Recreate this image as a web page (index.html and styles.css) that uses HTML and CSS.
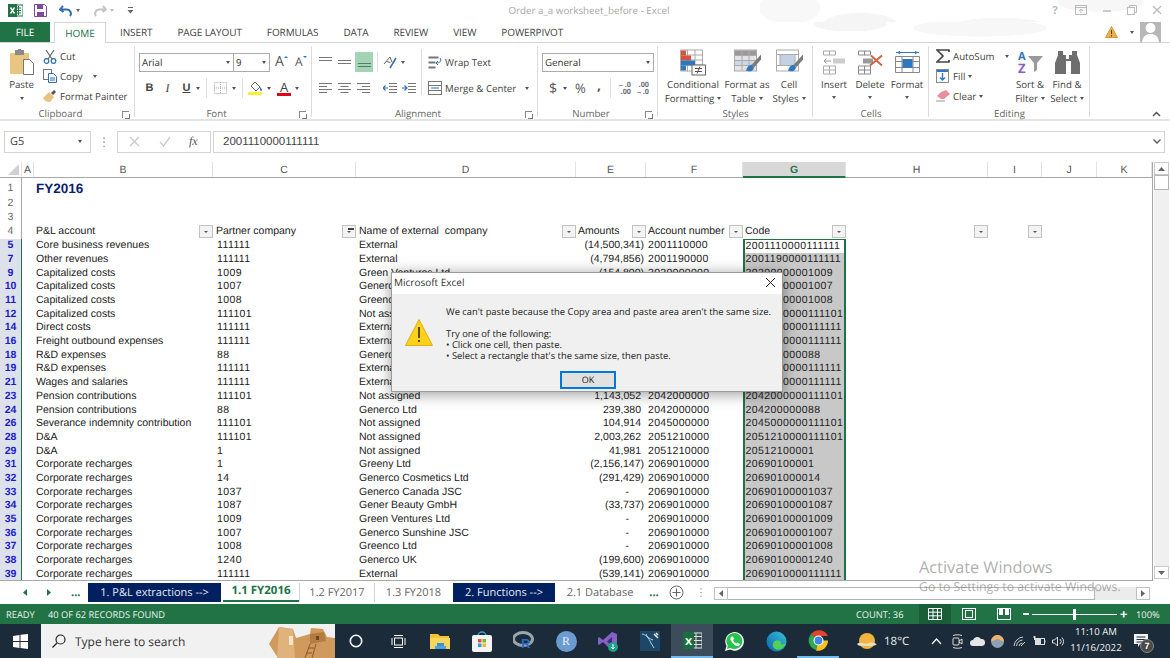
FILE: index.html
```html
<!DOCTYPE html>
<html lang="en">
<head>
<meta charset="utf-8">
<title>Order a_a worksheet_before - Excel</title>
<link rel="stylesheet" href="styles.css">
</head>
<body>
<div class="app">

<header class="titlebar">
  <div class="qat">
    <svg class="qi-xl" width="15" height="15" viewBox="0 0 15 15"><rect x="6" y="2" width="9" height="11" fill="#fff" stroke="#217346"/><path d="M8 5h5M8 7.500h5M8 10h5M10.500 3v9" stroke="#217346" fill="none"/><rect x="0" y="1" width="9" height="13" fill="#217346"/><path d="M2.500 4.500l4 6M6.500 4.500l-4 6" stroke="#fff" stroke-width="1.400"/></svg>
    <svg class="qi-save" width="13" height="13" viewBox="0 0 13 13"><path d="M.5.500h10l2 2v10H.500z" fill="#fff" stroke="#7d4a9e"/><rect x="3" y="1" width="6" height="4" fill="#7d4a9e"/><rect x="3" y="8" width="7" height="4" fill="#7d4a9e"/></svg>
    <svg class="qi-undo" width="14" height="13" viewBox="0 0 14 13"><path d="M4 2L1 5.500 4.500 8M1.500 5.500h6.500a4 4 0 0 1 3 6.500" fill="none" stroke="#2f6fb0" stroke-width="2"/></svg>
    <i class="caret qc1"></i>
    <svg class="qi-redo" width="14" height="13" viewBox="0 0 14 13"><path d="M10 2l3 3.500L9.500 8M12.500 5.500H6a4 4 0 0 0-3 6.500" fill="none" stroke="#c4c4c4" stroke-width="2"/></svg>
    <i class="caret lite qc2"></i>
    <svg class="qi-cust" width="7" height="8" viewBox="0 0 7 8"><path d="M1 1.500h5" stroke="#666"/><path d="M.5 4h6l-3 3.500z" fill="#666"/></svg>
  </div>
  <div class="doc-title">Order a_a worksheet_before - Excel</div>
  <div class="winctl">
    <span class="help">?</span>
    <svg width="12" height="10" viewBox="0 0 12 10"><rect x=".5" y=".5" width="11" height="9" fill="none" stroke="#bbb"/><path d="M.5 2.500h11M6 8V4M4 6l2-2 2 2" stroke="#bbb" fill="none"/></svg>
    <svg width="10" height="10" viewBox="0 0 10 10"><path d="M1 6h8" stroke="#bbb" stroke-width="1.500"/></svg>
    <svg width="10" height="10" viewBox="0 0 10 10"><rect x=".5" y="2.500" width="7" height="7" fill="none" stroke="#bbb"/><path d="M2.500 2.500v-2h7v7h-2" fill="none" stroke="#bbb"/></svg>
    <svg width="10" height="10" viewBox="0 0 10 10"><path d="M1 1l8 8M9 1l-8 8" stroke="#bbb" stroke-width="1.300"/></svg>
  </div>
</header>

<nav class="tabs">
  <div class="tab-file">FILE</div>
  <div class="tab-home">HOME</div>
  <div class="tab-list">
    <span>INSERT</span><span>PAGE LAYOUT</span><span>FORMULAS</span><span>DATA</span><span>REVIEW</span><span>VIEW</span><span>POWERPIVOT</span>
  </div>
  <div class="tab-right">
    <svg width="13" height="12" viewBox="0 0 13 12"><path d="M6.500.500l6 11H.500z" fill="#eab04a" stroke="#d39a35"/><path d="M6.500 4v4M6.500 9v1.500" stroke="#5b4416"/></svg>
    <i class="caret dark"></i>
    <svg class="avatar" width="21" height="22" viewBox="0 0 21 22"><rect width="21" height="22" fill="#b7b7b7"/><circle cx="10.500" cy="8" r="5" fill="#fff"/><path d="M2 22c1-6 4-8 8.500-8s7.500 2 8.500 8z" fill="#fff"/></svg>
  </div>
</nav>

<section class="ribbon">
  <div class="grp g-clip">
    <div class="grp-body clip-body">
      <div class="paste">
        <svg width="26" height="27" viewBox="0 0 26 27"><rect x="1" y="4" width="19" height="21" rx="1" fill="#eac582"/><rect x="6" y="1" width="9" height="5" fill="#8a8a8a"/><rect x="9" y="0" width="3" height="2" fill="#8a8a8a"/><path d="M14.500 10.500h6l4 4v11h-10z" fill="#fff" stroke="#777"/></svg>
        <span>Paste</span>
        <i class="caret dark"></i>
      </div>
      <div class="small-col">
        <div class="sm"><svg width="14" height="15" viewBox="0 0 14 15"><path d="M3 1l6 9M11 1l-6 9" stroke="#666" stroke-width="1.200"/><circle cx="3.500" cy="12" r="2.300" fill="none" stroke="#2f6fb0" stroke-width="1.200"/><circle cx="10.500" cy="12" r="2.300" fill="none" stroke="#2f6fb0" stroke-width="1.200"/></svg><span>Cut</span></div>
        <div class="sm"><svg width="14" height="14" viewBox="0 0 14 14"><rect x=".5" y=".5" width="8" height="10" fill="#fff" stroke="#777"/><path d="M5.500 4.500h5l3 3v6h-8z" fill="#fff" stroke="#2f6fb0"/><path d="M7 9h5M7 11h5" stroke="#2f6fb0"/></svg><span>Copy</span><i class="caret dark copy-caret"></i></div>
        <div class="sm"><svg width="14" height="14" viewBox="0 0 14 14"><path d="M8 4l3-3 2 2-3 3z" fill="#555"/><path d="M0 9l6-6 5 5-4 5c-3 0-5-1-7-4z" fill="#e8c27e"/></svg><span>Format Painter</span></div>
      </div>
    </div>
    <div class="grp-label"><span>Clipboard</span><i class="launch"></i></div>
  </div>

  <div class="grp g-font">
    <div class="grp-body rows">
      <div class="rrow">
        <div class="combo c-font"><span>Arial</span><i class="caret dark"></i></div>
        <div class="combo c-size"><span>9</span><i class="caret dark"></i></div>
        <span class="grow-a">A<i class="up"></i></span>
        <span class="grow-a small">A<i class="down"></i></span>
      </div>
      <div class="rrow">
        <span class="fb b">B</span><span class="fb i">I</span><span class="fb u">U</span><i class="caret dark"></i>
        <i class="vsep s1"></i>
        <svg class="borders" width="13" height="12" viewBox="0 0 13 12"><rect x=".5" y=".5" width="12" height="11" fill="none" stroke="#aaa" stroke-dasharray="1 1"/><path d="M6.500 0v12M0 6h13" stroke="#aaa" stroke-dasharray="1 1"/></svg>
        <i class="caret dark c2"></i>
        <i class="vsep s2"></i>
        <svg class="fill" width="15" height="14" viewBox="0 0 15 14"><path d="M7 1l5 5-4 4-5-5z" fill="#fff" stroke="#666"/><path d="M12 6c1 1 2 2 2 3s-2 1-2 0z" fill="#2f6fb0"/><rect x="0" y="11" width="14" height="3" fill="#ffef3a"/></svg>
        <i class="caret dark c3"></i>
        <span class="fcolor">A</span>
        <i class="caret dark c4"></i>
      </div>
    </div>
    <div class="grp-label"><span>Font</span><i class="launch"></i></div>
  </div>

  <div class="grp g-align">
    <div class="grp-body align-body">
      <div class="rows al-left">
        <div class="rrow">
          <svg class="al" width="13" height="14" viewBox="0 0 13 14"><path d="M0 2.500h13M0 5.500h13" stroke="#777"/></svg>
          <svg class="al" width="13" height="14" viewBox="0 0 13 14"><path d="M0 5.500h13M0 8.500h13" stroke="#777"/></svg>
          <span class="al-on"><svg width="13" height="14" viewBox="0 0 13 14"><path d="M0 8.500h13M0 11.500h13" stroke="#5c7c68"/></svg></span>
          <i class="vsep s3"></i>
          <svg class="orient" width="14" height="14" viewBox="0 0 14 14"><path d="M1 9l6-7 2 5M3.500 6.500l4 1" fill="none" stroke="#666"/><path d="M13 3L7 13" stroke="#2f6fb0" stroke-width="1.500"/></svg>
          <i class="caret dark c5"></i>
        </div>
        <div class="rrow">
          <svg class="al" width="13" height="12" viewBox="0 0 13 12"><path d="M0 1.500h13M0 4.500h8M0 7.500h13M0 10.500h8" stroke="#777"/></svg>
          <svg class="al" width="13" height="12" viewBox="0 0 13 12"><path d="M0 1.500h13M2.500 4.500h8M0 7.500h13M2.500 10.500h8" stroke="#777"/></svg>
          <svg class="al al3" width="13" height="12" viewBox="0 0 13 12"><path d="M0 1.500h13M5 4.500h8M0 7.500h13M5 10.500h8" stroke="#777"/></svg>
          <svg class="indent" width="14" height="12" viewBox="0 0 14 12"><path d="M6 1.500h8M6 4.500h8M6 7.500h8M6 10.500h8" stroke="#777"/><path d="M5 6H0M2.500 3.500L0 6l2.500 2.500" fill="none" stroke="#2f6fb0" stroke-width="1.200"/></svg>
          <svg class="indent i2" width="14" height="12" viewBox="0 0 14 12"><path d="M0 1.500h8M0 4.500h8M0 7.500h8M0 10.500h8" stroke="#777" transform="translate(6)"/><path d="M0 6h5M2.500 3.500L5 6 2.500 8.500" fill="none" stroke="#2f6fb0" stroke-width="1.200"/></svg>
        </div>
      </div>
      <i class="vsep tall"></i>
      <div class="rows al-right">
        <div class="sm"><svg width="14" height="13" viewBox="0 0 14 13"><path d="M.5 1.500h10M.5 6.500h7M.5 11.500h7" stroke="#777" stroke-width="2"/><path d="M12 2c2 3 0 5-4 5M10 5L8 7l2 2" fill="none" stroke="#2f6fb0"/></svg><span>Wrap Text</span></div>
        <div class="sm"><svg width="14" height="14" viewBox="0 0 14 14"><rect x=".5" y=".5" width="13" height="13" fill="#fff" stroke="#777"/><path d="M.5 4.500h13M.5 9.500h13" stroke="#777"/><path d="M3 7h8" stroke="#2f6fb0"/></svg><span>Merge &amp; Center</span><i class="caret dark merge-caret"></i></div>
      </div>
    </div>
    <div class="grp-label"><span>Alignment</span><i class="launch"></i></div>
  </div>

  <div class="grp g-num">
    <div class="grp-body rows">
      <div class="rrow"><div class="combo c-gen"><span>General</span><i class="caret dark"></i></div></div>
      <div class="rrow num-row">
        <span class="n-d">$</span><i class="caret dark c6"></i><span class="n-p">%</span><span class="n-c">,</span><i class="vsep s4"></i>
        <span class="n-dec"><b>←.0</b><b>.00</b></span><span class="n-dec"><b>.00</b><b>→.0</b></span>
      </div>
    </div>
    <div class="grp-label"><span>Number</span><i class="launch"></i></div>
  </div>

  <div class="grp g-styles">
    <div class="grp-body bigs">
      <div class="big b-cond">
        <svg width="26" height="26" viewBox="0 0 26 26"><path d="M.5.500h22v21H.500zM.5 5.500h22M.5 10.500h22M.5 15.500h22M7.500 0v22M15 0v22" fill="#fff" stroke="#aaa"/><rect x="1" y="1" width="5" height="5" fill="#d6553a"/><rect x="1" y="6" width="10" height="5" fill="#d6553a"/><rect x="1" y="11" width="14" height="5" fill="#2f78bd"/><rect x="1" y="16" width="5" height="5" fill="#2f78bd"/><rect x="12" y="15.500" width="13.500" height="10" fill="#fff" stroke="#666"/><path d="M15 19h7M15 22h7M20 17l-3 7" stroke="#555"/></svg>
        <span>Conditional<br>Formatting<i class="caret dark inl"></i></span>
      </div>
      <div class="big b-table">
        <svg width="27" height="26" viewBox="0 0 27 26"><rect x=".5" y=".5" width="22" height="21" fill="#e3e3e3" stroke="#aaa"/><rect x="1" y="1" width="21" height="5" fill="#9a9a9a"/><rect x="1" y="11" width="21" height="5" fill="#cfd8e6"/><path d="M.5 6h22M.5 11h22M.5 16h22M8 1v20M15 1v20" stroke="#aaa"/><path d="M27 5L18 15l2 3 7-8z" fill="#7a7a7a"/><path d="M18 15c-4 1-5 3-6 6 2 1 7 2 8-3z" fill="#2f78bd"/></svg>
        <span>Format as<br>Table<i class="caret dark inl"></i></span>
      </div>
      <div class="big b-cell">
        <svg width="27" height="26" viewBox="0 0 27 26"><rect x=".5" y=".5" width="22" height="21" fill="#fff" stroke="#aaa"/><rect x="4" y="5" width="15" height="11" fill="#c3d1e6" stroke="#aaa"/><path d="M.5 5h22M.5 16h22" stroke="#aaa"/><path d="M27 5L18 15l2 3 7-8z" fill="#7a7a7a"/><path d="M18 15c-4 1-5 3-6 6 2 1 7 2 8-3z" fill="#2f78bd"/></svg>
        <span>Cell<br>Styles<i class="caret dark inl"></i></span>
      </div>
    </div>
    <div class="grp-label nolaunch"><span>Styles</span></div>
  </div>

  <div class="grp g-cells">
    <div class="grp-body bigs">
      <div class="big b-ins">
        <svg width="24" height="24" viewBox="0 0 24 24"><path d="M1.500.500h12v4h-12zM7.500.500v4M1.500 15.500h12v8h-12zM1.500 19.500h12M7.500 15.500v8" fill="none" stroke="#aaa"/><rect x="11" y="8" width="12" height="5" fill="#ccc"/><path d="M9 10.500H2M4.500 8L2 10.500 4.500 13" fill="none" stroke="#999"/></svg>
        <span>Insert</span><i class="caret dark"></i>
      </div>
      <div class="big b-del">
        <svg width="26" height="24" viewBox="0 0 26 24"><path d="M1.500.500h12v4h-12zM7.500.500v4M1.500 15.500h12v8h-12zM1.500 19.500h12M7.500 15.500v8" fill="none" stroke="#888"/><rect x="6" y="8" width="10" height="5" fill="#999"/><path d="M13 15L25 5M14 5l11 10" stroke="#d2603f" stroke-width="1.800"/></svg>
        <span>Delete</span><i class="caret dark"></i>
      </div>
      <div class="big b-fmt">
        <svg width="25" height="25" viewBox="0 0 25 25"><path d="M1 2.500h23M3 2.500L5 1M3 2.500L5 4M22 2.500L20 1M22 2.500L20 4" stroke="#2f78bd" fill="none"/><path d="M.5 6.500h24v16H.500zM.5 11.500h24M.5 17.500h24M7 6.500v16M18 6.500v16" fill="#fff" stroke="#888"/><rect x="7.500" y="9" width="10" height="9" fill="#2f78bd"/></svg>
        <span>Format</span><i class="caret dark"></i>
      </div>
    </div>
    <div class="grp-label nolaunch"><span>Cells</span></div>
  </div>

  <div class="grp g-edit">
    <div class="grp-body edit-body">
      <div class="small-col">
        <div class="sm"><svg width="14" height="14" viewBox="0 0 14 14"><path d="M13 3V1H1l6 6-6 6h12v-2" fill="none" stroke="#444" stroke-width="1.600"/></svg><span>AutoSum</span><i class="caret dark sum-caret"></i></div>
        <div class="sm"><svg width="14" height="14" viewBox="0 0 14 14"><rect x=".5" y=".5" width="12" height="13" fill="#fff" stroke="#888"/><path d="M1 1h11v2H1z" fill="#2f78bd"/><path d="M6.500 4v7M4 8.500l2.500 2.500L9 8.500" fill="none" stroke="#2f78bd" stroke-width="1.400"/></svg><span>Fill</span><i class="caret dark"></i></div>
        <div class="sm"><svg width="14" height="12" viewBox="0 0 14 12"><path d="M5 2l5-2 4 4-6 5H5L1 6z" fill="#e7909b"/><path d="M0 11h9" stroke="#999"/></svg><span>Clear</span><i class="caret dark"></i></div>
      </div>
      <div class="big b-sort">
        <svg width="27" height="25" viewBox="0 0 27 25"><text x="1" y="10" class="az-a">A</text><text x="1" y="23" class="az-z">Z</text><path d="M11 6h15l-6 7v7l-3 2v-9z" fill="#9a9a9a"/></svg>
        <span>Sort &amp;<br>Filter<i class="caret dark inl"></i></span>
      </div>
      <div class="big b-find">
        <svg width="25" height="23" viewBox="0 0 25 23"><path d="M3 0h5v4h3v4h3V4h3V0h5v4l3 8v11h-9V10h-5v13H0V12l3-8z" fill="#6e6e6e"/></svg>
        <span>Find &amp;<br>Select<i class="caret dark inl"></i></span>
      </div>
    </div>
    <div class="grp-label nolaunch"><span>Editing</span></div>
  </div>

  <div class="collapse"><svg width="9" height="6" viewBox="0 0 9 6"><path d="M1 5l3.500-3.500L8 5" fill="none" stroke="#555" stroke-width="1.500"/></svg></div>
</section>

<section class="fbar">
  <div class="namebox"><span>G5</span><i class="caret dark"></i></div>
  <div class="fdots">⋮</div>
  <div class="fbtns">
    <svg width="11" height="11" viewBox="0 0 11 11"><path d="M1 1l9 9M10 1l-9 9" stroke="#c9c9c9" stroke-width="1.300"/></svg>
    <svg width="12" height="11" viewBox="0 0 12 11"><path d="M1 6l3.500 4L11 1" fill="none" stroke="#c9c9c9" stroke-width="1.300"/></svg>
    <span class="fx">fx</span>
  </div>
  <div class="finput"><span>2001110000111111</span><svg width="8" height="5" viewBox="0 0 8 5"><path d="M.5.500L4 4 7.500.500" fill="none" stroke="#555" stroke-width="1.300"/></svg></div>
</section>

<section class="sheet">
  <div class="grid">
    <div class="row colhead">
      <div class="corner"><svg width="11" height="11" viewBox="0 0 11 11"><path d="M11 0v11H0z" fill="#d0d0d0"/></svg></div>
      <div>A</div><div>B</div><div>C</div><div>D</div><div>E</div><div>F</div><div class="col-on">G</div><div>H</div><div>I</div><div>J</div><div>K</div>
    </div>
    <div class="row r1"><div class="rn">1</div><div></div><div class="b title">FY2016</div></div>
    <div class="row"><div class="rn">2</div></div>
    <div class="row"><div class="rn">3</div></div>
    <div class="row hrow">
      <div class="rn">4</div><div></div>
      <div class="b fl"><span>P&amp;L account</span><i class="flt"></i></div>
      <div class="c fl"><span>Partner company</span><i class="flt on"></i></div>
      <div class="d fl"><span>Name of external  company</span><i class="flt"></i></div>
      <div class="fl e0"><span>Amounts</span><i class="flt"></i></div>
      <div class="f fl"><span>Account number</span><i class="flt"></i></div>
      <div class="g0 fl"><span>Code</span><i class="flt"></i></div>
      <div class="fl"><span></span><i class="flt"></i></div>
      <div class="fl"><span></span><i class="flt"></i></div>
    </div>
    <div class="row"><div class="rn on">5</div><div></div><div class="b">Core business revenues</div><div class="c">111111</div><div class="d">External</div><div class="e np">(14,500,341)</div><div class="f">2001110000</div><div class="g first">2001110000111111</div></div>
    <div class="row"><div class="rn on">7</div><div></div><div class="b">Other revenues</div><div class="c">111111</div><div class="d">External</div><div class="e np">(4,794,856)</div><div class="f">2001190000</div><div class="g sel">2001190000111111</div></div>
    <div class="row"><div class="rn on">9</div><div></div><div class="b">Capitalized costs</div><div class="c">1009</div><div class="d">Green Ventures Ltd</div><div class="e np">(154,800)</div><div class="f">2020000000</div><div class="g sel">20200000001009</div></div>
    <div class="row"><div class="rn on">10</div><div></div><div class="b">Capitalized costs</div><div class="c">1007</div><div class="d">Generco Sunshine JSC</div><div class="e">-</div><div class="f">2020000000</div><div class="g sel">20200000001007</div></div>
    <div class="row"><div class="rn on">11</div><div></div><div class="b">Capitalized costs</div><div class="c">1008</div><div class="d">Greenco Ltd</div><div class="e">-</div><div class="f">2020000000</div><div class="g sel">20200000001008</div></div>
    <div class="row"><div class="rn on">12</div><div></div><div class="b">Capitalized costs</div><div class="c">111101</div><div class="d">Not assigned</div><div class="e">-</div><div class="f">2020000000</div><div class="g sel">2020000000111101</div></div>
    <div class="row"><div class="rn on">14</div><div></div><div class="b">Direct costs</div><div class="c">111111</div><div class="d">External</div><div class="e">-</div><div class="f">2030000000</div><div class="g sel">2030000000111111</div></div>
    <div class="row"><div class="rn on">16</div><div></div><div class="b">Freight outbound expenses</div><div class="c">111111</div><div class="d">External</div><div class="e">-</div><div class="f">2030000000</div><div class="g sel">2030000000111111</div></div>
    <div class="row"><div class="rn on">18</div><div></div><div class="b">R&amp;D expenses</div><div class="c">88</div><div class="d">Generco Ltd</div><div class="e">-</div><div class="f">2040000000</div><div class="g sel">204000000088</div></div>
    <div class="row"><div class="rn on">19</div><div></div><div class="b">R&amp;D expenses</div><div class="c">111111</div><div class="d">External</div><div class="e">-</div><div class="f">2040000000</div><div class="g sel">2040000000111111</div></div>
    <div class="row"><div class="rn on">21</div><div></div><div class="b">Wages and salaries</div><div class="c">111111</div><div class="d">External</div><div class="e">-</div><div class="f">2041000000</div><div class="g sel">2041000000111111</div></div>
    <div class="row"><div class="rn on">23</div><div></div><div class="b">Pension contributions</div><div class="c">111101</div><div class="d">Not assigned</div><div class="e">1,143,052</div><div class="f">2042000000</div><div class="g sel">2042000000111101</div></div>
    <div class="row"><div class="rn on">24</div><div></div><div class="b">Pension contributions</div><div class="c">88</div><div class="d">Generco Ltd</div><div class="e">239,380</div><div class="f">2042000000</div><div class="g sel">204200000088</div></div>
    <div class="row"><div class="rn on">26</div><div></div><div class="b">Severance indemnity contribution</div><div class="c">111101</div><div class="d">Not assigned</div><div class="e">104,914</div><div class="f">2045000000</div><div class="g sel">2045000000111101</div></div>
    <div class="row"><div class="rn on">28</div><div></div><div class="b">D&amp;A</div><div class="c">111101</div><div class="d">Not assigned</div><div class="e">2,003,262</div><div class="f">2051210000</div><div class="g sel">2051210000111101</div></div>
    <div class="row"><div class="rn on">29</div><div></div><div class="b">D&amp;A</div><div class="c">1</div><div class="d">Not assigned</div><div class="e">41,981</div><div class="f">2051210000</div><div class="g sel">20512100001</div></div>
    <div class="row"><div class="rn on">31</div><div></div><div class="b">Corporate recharges</div><div class="c">1</div><div class="d">Greeny Ltd</div><div class="e np">(2,156,147)</div><div class="f">2069010000</div><div class="g sel">20690100001</div></div>
    <div class="row"><div class="rn on">32</div><div></div><div class="b">Corporate recharges</div><div class="c">14</div><div class="d">Generco Cosmetics Ltd</div><div class="e np">(291,429)</div><div class="f">2069010000</div><div class="g sel">206901000014</div></div>
    <div class="row"><div class="rn on">33</div><div></div><div class="b">Corporate recharges</div><div class="c">1037</div><div class="d">Generco Canada JSC</div><div class="e dash">-</div><div class="f">2069010000</div><div class="g sel">20690100001037</div></div>
    <div class="row"><div class="rn on">34</div><div></div><div class="b">Corporate recharges</div><div class="c">1087</div><div class="d">Gener Beauty GmbH</div><div class="e np">(33,737)</div><div class="f">2069010000</div><div class="g sel">20690100001087</div></div>
    <div class="row"><div class="rn on">35</div><div></div><div class="b">Corporate recharges</div><div class="c">1009</div><div class="d">Green Ventures Ltd</div><div class="e dash">-</div><div class="f">2069010000</div><div class="g sel">20690100001009</div></div>
    <div class="row"><div class="rn on">36</div><div></div><div class="b">Corporate recharges</div><div class="c">1007</div><div class="d">Generco Sunshine JSC</div><div class="e dash">-</div><div class="f">2069010000</div><div class="g sel">20690100001007</div></div>
    <div class="row"><div class="rn on">37</div><div></div><div class="b">Corporate recharges</div><div class="c">1008</div><div class="d">Greenco Ltd</div><div class="e dash">-</div><div class="f">2069010000</div><div class="g sel">20690100001008</div></div>
    <div class="row"><div class="rn on">38</div><div></div><div class="b">Corporate recharges</div><div class="c">1240</div><div class="d">Generco UK</div><div class="e np">(199,600)</div><div class="f">2069010000</div><div class="g sel">20690100001240</div></div>
    <div class="row"><div class="rn on">39</div><div></div><div class="b">Corporate recharges</div><div class="c">111111</div><div class="d">External</div><div class="e np">(539,141)</div><div class="f">2069010000</div><div class="g sel">2069010000111111</div></div>
  </div>
  <div class="vscroll">
    <div class="sb-btn"><svg width="7" height="4" viewBox="0 0 7 4"><path d="M3.500 0L7 4H0z" fill="#666"/></svg></div>
    <div class="sb-thumb"></div>
    <div class="sb-track"></div>
    <div class="sb-btn"><svg width="7" height="4" viewBox="0 0 7 4"><path d="M3.500 4L7 0H0z" fill="#666"/></svg></div>
  </div>
</section>

<section class="sheettabs">
  <div class="tabnav">
    <svg width="4" height="7" viewBox="0 0 4 7"><path d="M4 0v7L0 3.500z" fill="#217346"/></svg>
    <svg width="4" height="7" viewBox="0 0 4 7"><path d="M0 0v7l4-3.500z" fill="#217346"/></svg>
    <span>...</span>
  </div>
  <div class="st navy t1">1. P&amp;L extractions --&gt;</div>
  <div class="st active">1.1 FY2016</div>
  <div class="st t12">1.2 FY2017</div>
  <div class="st t13">1.3 FY2018</div>
  <div class="st navy t2">2. Functions --&gt;</div>
  <div class="st t21">2.1 Database</div>
  <div class="st-more">...</div>
  <svg class="st-add" width="15" height="15" viewBox="0 0 15 15"><circle cx="7.500" cy="7.500" r="6.500" fill="none" stroke="#666"/><path d="M7.500 3.500v8M3.500 7.500h8" stroke="#666" stroke-width="1.200"/></svg>
  <div class="st-dots">⋮</div>
  <div class="hscroll">
    <div class="hs-btn"><svg width="4" height="7" viewBox="0 0 4 7"><path d="M4 0v7L0 3.500z" fill="#666"/></svg></div>
    <div class="hs-thumb"></div>
    <div class="hs-track"></div>
    <div class="hs-btn"><svg width="4" height="7" viewBox="0 0 4 7"><path d="M0 0v7l4-3.500z" fill="#666"/></svg></div>
  </div>
</section>

<footer class="status">
  <span class="ready">READY</span>
  <span class="found">40 OF 62 RECORDS FOUND</span>
  <span class="count">COUNT: 36</span>
  <div class="view on"><svg width="14" height="12" viewBox="0 0 14 12"><path d="M.5.500h13v11H.500zM.5 4.200h13M.5 7.800h13M5 .500v11M9.500 .500v11" fill="none" stroke="#fff"/></svg></div>
  <div class="view"><svg width="14" height="12" viewBox="0 0 14 12"><rect x=".5" y=".5" width="13" height="11" fill="none" stroke="#fff"/><rect x="3.500" y="2.500" width="7" height="7" fill="none" stroke="#fff"/></svg></div>
  <div class="view"><svg width="14" height="12" viewBox="0 0 14 12"><rect x=".5" y=".5" width="13" height="11" fill="none" stroke="#fff"/><rect x="2" y="1" width="4" height="6" fill="#fff"/><rect x="8" y="1" width="4" height="6" fill="#fff"/></svg></div>
  <div class="zoom">
    <i class="z-m"></i>
    <div class="z-track"><i class="z-thumb"></i></div>
    <span class="z-p">+</span>
  </div>
  <span class="pct">100%</span>
</footer>

<footer class="taskbar">
  <div class="tb-start"><svg width="15" height="15" viewBox="0 0 15 15"><path d="M0 2l6.500-1v6H0zM7.500.800L15 0v7H7.500zM0 8h6.500v6L0 13zM7.500 8H15v7l-7.500-1z" fill="#fff"/></svg></div>
  <div class="tb-search">
    <svg width="14" height="14" viewBox="0 0 14 14"><circle cx="8.500" cy="5.500" r="4.500" fill="none" stroke="#222" stroke-width="1.200"/><path d="M5 9l-4.500 4.500" stroke="#222" stroke-width="1.200"/></svg>
    <span>Type here to search</span>
    <svg class="pueblo" width="66" height="34" viewBox="0 0 66 34"><path d="M0 20L10 3l14 2 3 9 14-4 1-6 12 1 4 8 8 1v20H9z" fill="#cf9a5c"/><path d="M10 3l14 2 2 29H8z" fill="#e0b27c"/><path d="M41 10l14-2 2 9-16 3z" fill="#b47c41"/><rect x="20" y="12" width="4" height="9" fill="#f6e4cc"/><rect x="47" y="12" width="3" height="4" fill="#6d4524"/><path d="M41 20l-5 14M47 20l-4 14M39 24h6M37 29h6" stroke="#8a5a2b"/></svg>
  </div>
  <div class="ti"><svg width="14" height="14" viewBox="0 0 14 14"><circle cx="7" cy="7" r="5.700" fill="none" stroke="#fff" stroke-width="1.600"/></svg></div>
  <div class="ti"><svg width="15" height="13" viewBox="0 0 15 13"><path d="M3 .500h9M3 12.500h9" stroke="#fff"/><rect x="3.500" y="3" width="8" height="7" fill="none" stroke="#fff"/><path d="M1 3v7M14 3v7" stroke="#fff"/></svg></div>
  <div class="ti"><svg width="20" height="17" viewBox="0 0 20 17"><path d="M0 1h8l2 2h9v13H0z" fill="#f4c430"/><rect x="0" y="5" width="20" height="11" fill="#f8d55e"/><rect x="7" y="10" width="7" height="3" fill="#3a8fd6"/><rect x="5" y="13" width="11" height="3" fill="#4aa3e8"/></svg></div>
  <div class="ti"><svg width="20" height="21" viewBox="0 0 20 21"><path d="M6 5a4 4 0 0 1 8 0" fill="none" stroke="#3aa0d8" stroke-width="1.500"/><rect x="0" y="4" width="20" height="17" rx="2" fill="#f4f4f4"/><rect x="6" y="8" width="3.500" height="3.500" fill="#e2552c"/><rect x="10.500" y="8" width="3.500" height="3.500" fill="#7db928"/><rect x="6" y="12.500" width="3.500" height="3.500" fill="#2a9ddf"/><rect x="10.500" y="12.500" width="3.500" height="3.500" fill="#f5b81e"/></svg></div>
  <div class="ti"><svg width="22" height="22" viewBox="0 0 22 22"><ellipse cx="10" cy="9" rx="9.500" ry="6.500" fill="none" stroke="#9aa4ad" stroke-width="3"/><text x="8" y="18" class="r-big">R</text></svg></div>
  <div class="ti"><span class="r-circle">R</span></div>
  <div class="ti"><svg width="20" height="21" viewBox="0 0 20 21"><path d="M14 1l5 2v15l-5 2L5 11 1 14l-1-1V7l1-1 4 3z" fill="#8661c5"/><path d="M14 6v9l-5-4.500z" fill="#3f2a7a"/><circle cx="15" cy="16" r="5" fill="#1fa187"/><path d="M15 13v5M13 16l2 2 2-2" stroke="#fff" fill="none"/></svg></div>
  <div class="ti"><svg width="20" height="20" viewBox="0 0 20 20"><rect width="20" height="20" fill="#1c4768"/><path d="M2 3c3 0 7 4 9 9l3 5M6 3c1 3 4 5 7 6" fill="none" stroke="#b8cfe0"/><path d="M14 3l4 4M16 2l2 2" stroke="#fff" stroke-width="1.500"/></svg></div>
  <div class="ti ti-on"><svg width="19" height="17" viewBox="0 0 19 17"><rect x="9" y="1" width="10" height="15" fill="none" stroke="#d6e7db"/><path d="M9 4.500h10M9 8.500h10M9 12.500h10M13 1v15" stroke="#d6e7db"/><rect y="0" width="11" height="17" fill="#1b6e3e"/><text x="2" y="13" class="xl">x</text></svg></div>
  <div class="ti"><svg width="21" height="21" viewBox="0 0 21 21"><path d="M1 20l1.500-5A9.300 9.300 0 1 1 6 18.500z" fill="#fff"/><path d="M2.800 18l1-3.300A8 8 0 1 1 6.300 17z" fill="#27c24c"/><path d="M7.500 5.500c-1.500 1-1.500 3 0 5 1.500 2.500 4 4.500 6 4.500 1.500 0 2.500-1 2.500-2l-2.500-1.500-1 1c-1.500-.5-3-2-3.500-3.500l1-1L9 5.500z" fill="#fff"/></svg></div>
  <div class="ti"><svg width="21" height="21" viewBox="0 0 21 21"><defs><linearGradient id="eg" x1="0" y1="1" x2="1" y2="0"><stop offset="0" stop-color="#0c5fb0"/><stop offset="1" stop-color="#36c4d6"/></linearGradient></defs><circle cx="10.500" cy="10.500" r="10" fill="url(#eg)"/><path d="M20 12c-1 5-7 8-11 6-3-2-3-6 0-8s7 0 6 3c4 1 5-1 5-1z" fill="#4fd15a"/></svg></div>
  <div class="ti ti-chrome"><svg width="21" height="21" viewBox="0 0 21 21"><path d="M10.500 10.500L3 4a10 10 0 0 1 17 2h-9.500z" fill="#e2432f"/><path d="M10.500 10.500L3 4a10 10 0 0 0 5 16z" fill="#2fa84f"/><path d="M10.500 10.500H20a10 10 0 0 1-12 10z" fill="#f8c21c"/><circle cx="10.500" cy="10.500" r="5" fill="#fff"/><circle cx="10.500" cy="10.500" r="3.900" fill="#3f86ea"/></svg></div>
  <div class="tray">
    <svg class="sun" width="20" height="17" viewBox="0 0 20 17"><circle cx="10" cy="8" r="8" fill="#f2b53a"/><path d="M0 11c4-3 8 1 12-1s6 1 8 1c-2 2-5 2-7 2H4c-2 0-3-1-4-2z" fill="#e7dcc4"/></svg>
    <span class="temp">18°C</span>
    <svg class="t1x" width="11" height="7" viewBox="0 0 11 7"><path d="M1 6l4.500-5L10 6" fill="none" stroke="#fff" stroke-width="1.200"/></svg>
    <svg class="t2x" width="11" height="15" viewBox="0 0 11 15"><path d="M1 1.500c3-1 6-1 9 0M1 13.500c3 1 6 1 9 0" fill="none" stroke="#ddd"/><rect x="1" y="4" width="6" height="7" rx="1" fill="none" stroke="#ddd"/><path d="M7 7l3-2v5L7 8" fill="none" stroke="#ddd"/></svg>
    <svg class="t3x" width="15" height="10" viewBox="0 0 15 10"><path d="M3 10a3 3 0 0 1 0-6 4.500 4.500 0 0 1 8-1 3.500 3.500 0 0 1 1 7z" fill="#e6e6e6"/></svg>
    <svg class="t4x" width="13" height="13" viewBox="0 0 13 13"><circle cx="6.500" cy="6.500" r="6.500" fill="#8f9fb5"/><path d="M0 6.500a6.500 6.500 0 0 1 13 0l-3-1-3.500-2-3 2z" fill="#efb36a"/></svg>
    <svg class="t5x" width="13" height="12" viewBox="0 0 13 12"><path d="M1 11a10 10 0 0 1 9-9M3.500 11a7 7 0 0 1 6-6M6 11a4 4 0 0 1 3.500-3" fill="none" stroke="#ccc"/><path d="M8 11l4-4" stroke="#ccc"/></svg>
    <svg class="t6x" width="13" height="10" viewBox="0 0 13 10"><rect x="2.500" y="2.500" width="9" height="6" fill="none" stroke="#ddd"/><rect x="3" y="3" width="5" height="5" fill="#ddd"/><path d="M12 4.500v2M0 1h3M1.500 0v4" stroke="#ddd"/></svg>
    <svg class="t7x" width="13" height="11" viewBox="0 0 13 11"><path d="M.5 4h2l3-3v9l-3-3h-2z" fill="none" stroke="#ddd"/><path d="M8 3a3.500 3.500 0 0 1 0 5M10 1.500a6 6 0 0 1 0 8" fill="none" stroke="#ddd"/></svg>
    <div class="clock"><span>11:10 AM</span><span>11/16/2022</span></div>
    <div class="notif">
      <svg width="16" height="15" viewBox="0 0 16 15"><path d="M0 0h14v10H6l-2 3v-3H0z" fill="#f2f2f2"/><path d="M2.500 3h9M2.500 5.500h9M2.500 8h6" stroke="#1c2b38"/></svg>
      <span class="nbadge">7</span>
    </div>
  </div>
</footer>

<div class="dialog">
  <div class="dlg-title"><span>Microsoft Excel</span><svg width="11" height="11" viewBox="0 0 11 11"><path d="M1 1l9 9M10 1l-9 9" stroke="#222"/></svg></div>
  <div class="dlg-body">
    <div class="dlg-main">
      <svg class="dlg-warn" width="28" height="27" viewBox="0 0 28 27"><path d="M14 .500L27.500 26.500H.500z" fill="#ffd11a" stroke="#e0ae0c"/><path d="M14 8v11" stroke="#222" stroke-width="1.500"/><path d="M14 21v2" stroke="#222" stroke-width="1.500"/></svg>
      <div class="dlg-text">
        <p class="dlg-lead">We can't paste because the Copy area and paste area aren't the same size.</p>
        <p>Try one of the following:</p>
        <p>• Click one cell, then paste.</p>
        <p>• Select a rectangle that's the same size, then paste.</p>
      </div>
    </div>
    <div class="dlg-btn">OK</div>
  </div>
</div>

<div class="activate">
  <div class="act1">Activate Windows</div>
  <div class="act2">Go to Settings to activate Windows.</div>
</div>

</div>
</body>
</html>
```

FILE: styles.css
```css
* { box-sizing: border-box; }
html, body { margin: 0; padding: 0; }
body { width: 1170px; height: 658px; overflow: hidden; background: #fff; font-family: "Open Sans", "Noto Sans", sans-serif; color: #444; text-rendering: geometricPrecision; }
.app { position: relative; width: 1170px; height: 658px; display: flex; flex-direction: column; overflow: hidden; }
svg { display: block; flex: none; }
i { font-style: normal; }

.caret { display: inline-block; flex: none; width: 0; height: 0; border-left: 2.5px solid transparent; border-right: 2.5px solid transparent; border-top: 3px solid #666; }
.caret.lite { border-top-color: #bbb; }
.caret.dark { border-top-color: #555; }
.caret.inl { margin-left: 3px; vertical-align: middle; }

/* title bar */
.titlebar { height: 22px; flex: none; display: flex; align-items: center; position: relative; background:
  radial-gradient(ellipse 60px 18px at 860px 24px, #f5f5f5 60%, transparent 62%),
  radial-gradient(ellipse 90px 20px at 1000px 30px, #f6f6f6 60%, transparent 62%),
  radial-gradient(ellipse 50px 26px at 790px 8px, #f8f8f8 60%, transparent 62%),
  radial-gradient(ellipse 70px 16px at 1100px 2px, #f7f7f7 60%, transparent 62%),
  #fff; }
.qat { display: flex; align-items: center; padding-left: 8px; margin-top: -2px; }
.qi-save { margin-left: 11px; }
.qi-undo { margin-left: 12px; }
.qc1 { margin-left: 3px; }
.qi-redo { margin-left: 13px; }
.qc2 { margin-left: 3px; }
.qi-cust { margin-left: 13px; }
.doc-title { flex: 1; text-align: center; font-size: 9.800px; color: #a8a8a8; margin-left: -6px; margin-top: -2px; }
.winctl { display: flex; align-items: center; gap: 15px; padding-right: 8px; margin-top: -2px; }
.help { font-size: 11px; font-weight: 700; color: #bbb; width: 10px; text-align: center; }

/* tabs */
.tabs { height: 21px; flex: none; display: flex; align-items: stretch; font-size: 10px; color: #444; border-bottom: 1px solid #d4d4d4; background:
  radial-gradient(ellipse 110px 14px at 980px 6px, #f7f7f7 60%, transparent 62%),
  radial-gradient(ellipse 60px 12px at 850px 2px, #f5f5f5 60%, transparent 62%),
  #fff; }
.tab-file { width: 50px; background: #217346; color: #fff; display: flex; align-items: center; justify-content: center; }
.tab-home { width: 52px; margin-left: 4px; margin-bottom: -1px; background: #fff; border: 1px solid #d4d4d4; border-bottom: 0; color: #217346; display: flex; align-items: center; justify-content: center; }
.tab-list { display: flex; align-items: center; gap: 25px; margin-left: 14px; letter-spacing: -.1px; }
.tab-right { margin-left: auto; display: flex; align-items: center; padding-right: 9px; }
.tab-right .caret { margin-left: 12px; margin-right: 6px; }
.avatar { margin-top: -2px; }

/* ribbon */
.ribbon { height: 78px; flex: none; display: flex; position: relative; border-bottom: 2px solid #e4e4e4; font-size: 9.700px; color: #444; }
.grp { display: flex; flex-direction: column; flex: none; height: 76px; position: relative; }
.grp::after { content: ""; position: absolute; right: 0; top: 3px; bottom: 2px; width: 1px; background: #dcdcdc; }
.grp-body { height: 66px; display: flex; }
.grp-label { height: 10px; display: flex; align-items: center; font-size: 9.700px; color: #666; line-height: 10px; }
.grp-label span { flex: 1; text-align: center; }
.launch { width: 14px; height: 8px; flex: none; position: relative; }
.launch::before { content: ""; position: absolute; left: 1px; top: 1px; width: 6px; height: 6px; border-left: 1px solid #888; border-top: 1px solid #888; }
.launch::after { content: ""; position: absolute; left: 4px; top: 4px; width: 4px; height: 4px; border-right: 1px solid #777; border-bottom: 1px solid #777; }
.g-clip { width: 135px; }
.g-font { width: 177px; }
.g-align { width: 226px; }
.g-num { width: 120px; }
.g-styles { width: 155px; }
.g-cells { width: 116px; }
.g-edit { width: 161px; }
.collapse { margin-left: auto; align-self: flex-end; padding: 0 9px 2px 0; }

.clip-body { padding-top: 3px; }
.paste { width: 43px; display: flex; flex-direction: column; align-items: center; padding-top: 3px; padding-left: 0; }
.paste span { margin-top: 2px; line-height: 14px; }
.paste .caret { margin-top: 5px; }
.small-col { display: flex; flex-direction: column; }
.sm { display: flex; align-items: center; height: 20px; gap: 3px; white-space: nowrap; }
.copy-caret { margin-left: 7px; }
.sum-caret { margin-left: 7px; }
.rows { display: flex; flex-direction: column; gap: 6px; padding-top: 9px; }
.rrow { display: flex; align-items: center; height: 20px; }
.g-font .rows { padding-left: 4px; }
.combo { display: flex; align-items: center; height: 19px; border: 1px solid #ababab; background: #fff; padding: 0 3px 0 2px; color: #333; justify-content: space-between; }
.c-font { width: 95px; }
.c-size { width: 37px; margin-left: -1px; }
.c-gen { width: 112px; margin-left: 4px; }
.grow-a { font-size: 14px; width: 17px; margin-left: 5px; position: relative; display: flex; color: #555; line-height: 20px; }
.grow-a.small { font-size: 12px; margin-left: 3px; }
.grow-a .up, .grow-a .down { display: block; width: 0; height: 0; margin-top: 4px; border-left: 2px solid transparent; border-right: 2px solid transparent; border-bottom: 2px solid #2f78bd; }
.grow-a .down { border-bottom: 0; border-top: 2px solid #2f78bd; }
.fb { width: 19px; text-align: center; font: 11px/14px "Liberation Sans", sans-serif; color: #444; }
.fb.b { font-weight: 700; }
.fb.i { font-style: italic; font-family: "Liberation Serif", serif; font-size: 12px; }
.fb.u { text-decoration: underline; font-weight: 700; }
.vsep { display: block; width: 1px; height: 20px; background: #dedede; flex: none; }
.s1 { margin: 0 7px 0 6px; }
.borders { margin-right: 5px; }
.c2 { margin-right: 6px; }
.s2 { margin-right: 5px; }
.fill { margin-right: 4px; }
.c3 { margin-right: 6px; }
.fcolor { width: 14px; height: 15px; text-align: center; font: 13px/12px "Open Sans", sans-serif; color: #444; border-bottom: 3px solid #e3001b; margin-right: 4px; }
.align-body { padding-left: 7px; }
.al-left { width: 102px; }
.al { margin-right: 6px; }
.al3 { margin-right: 13px; }
.al-on { width: 18px; height: 20px; margin-left: -2px; background: #a3d4b4; display: flex; align-items: center; justify-content: center; }
.s3 { margin: 0 5px 0 4px; }
.orient { margin-right: 2px; }
.c5 { margin-left: 2px; }
.indent { margin-right: 5px; }
.i2 { margin-right: 0; }
.tall { height: 46px; margin: 6px 6px 0 0; }
.al-right { gap: 6px; }
.al-right .sm { height: 20px; }
.merge-caret { margin-left: 6px; }
.num-row { padding-left: 11px; font-size: 14px; color: #555; }
.n-d { width: 10px; font-size: 14px; }
.c6 { margin: 0 8px 0 4px; }
.n-p { width: 14px; font-size: 13px; }
.n-c { width: 7px; margin-left: 8px; font-weight: 700; margin-top: -6px; }
.s4 { margin: 0 6px 0 6px; }
.n-dec { display: flex; flex-direction: column; font: 700 7.500px/7px "Liberation Sans", sans-serif; color: #667; width: 14px; margin-right: 4px; align-items: flex-end; }
.n-dec b { display: block; }
.bigs { position: relative; }
.big { display: flex; flex-direction: column; align-items: center; text-align: center; line-height: 13.500px; flex: none; padding-top: 6px; }
.big svg { height: 27px; }
.big > span { margin-top: 2px; white-space: nowrap; }
.big > .caret { margin-top: 4px; }
.b-cond { width: 70px; }
.b-table { width: 38px; }
.b-cell { width: 46px; }
.b-ins { width: 38px; margin-left: 2px; }
.b-del { width: 34px; }
.b-fmt { width: 40px; }
.edit-body { padding: 3px 0 0 7px; }
.g-edit .small-col { width: 75px; }
.b-sort { width: 38px; padding-top: 3px; }
.b-find { width: 36px; padding-top: 3px; }
.b-sort svg, .b-find svg { height: 27px; }
.az-a { font: 700 11px "Open Sans", sans-serif; fill: #2f78bd; }
.az-z { font: 700 13px "Open Sans", sans-serif; fill: #8661c5; }

/* formula bar */
.fbar { height: 41px; flex: none; display: flex; align-items: center; padding: 0 5px 0 4px; background: #fff; color: #555; }
.namebox { width: 87px; height: 22px; border: 1px solid #d4d4d4; display: flex; align-items: center; justify-content: space-between; padding: 0 8px 0 5px; font-size: 11px; color: #444; }
.fdots { width: 26px; text-align: center; font-size: 12px; color: #888; }
.fbtns { width: 94px; height: 22px; border: 1px solid #d4d4d4; display: flex; align-items: center; padding-left: 11px; gap: 19px; }
.fx { font: italic 12px "Liberation Serif", serif; color: #555; margin-left: -1px; }
.finput { flex: 1; height: 22px; margin-left: 2px; border: 1px solid #d4d4d4; display: flex; align-items: center; justify-content: space-between; padding: 0 3px 0 9px; font-size: 11.500px; color: #444; font-family: "Liberation Sans", sans-serif; }

/* sheet */
.sheet { height: 419px; flex: none; display: flex; font: 10.500px/13.700px "Liberation Sans", Arial, sans-serif; color: #222; }
.grid { width: 1153px; border-right: 1px solid #a8a8a8; border-bottom: 1px solid #a8a8a8; flex: none; overflow: hidden; }
.row { display: grid; grid-template-columns: 22px 12px 179px 143px 220px 70px 97px 103px 142px 54px 55px 55px; height: 13.700px; white-space: nowrap; }
.colhead { height: 16px; border-bottom: 1px solid #a8a8a8; color: #555; text-align: center; line-height: 16px; font-size: 10.500px; background: #fff; }
.colhead > div { border-right: 1px solid #e2e2e2; height: 15px; }
.corner { display: flex; justify-content: flex-end; align-items: flex-end; padding: 0 2px 2px 0; }
.col-on { background: #d8d8d8; border-bottom: 2px solid #217346; height: 16px !important; color: #217346; font-weight: 700; }
.r1 { height: 19.200px; }
.hrow { height: 14.700px; }
.rn { background: #fff; border-right: 1px solid #a8a8a8; text-align: center; color: #666; font-size: 10.500px; }
.rn.on { background: #dde2ea; color: #1a1ac8; font-weight: 700; border-right: 1px solid #217346; }
.r1 .rn { line-height: 21px; }
.title { color: #0b1f6b; font-weight: 700; font-size: 13.500px; line-height: 21px; }
.b { padding-left: 2px; }
.c { padding-left: 4px; letter-spacing: .4px; }
.d { padding-left: 3px; white-space: pre; }
.d span { white-space: pre; }
.e { text-align: right; padding-right: 5px; }
.e.np { padding-right: 2px; }
.e.dash { padding-right: 17px; }
.f { padding-left: 2px; letter-spacing: .3px; }
.g { padding-left: .5px; border-left: 2px solid #217346; border-right: 2px solid #217346; color: #222; letter-spacing: .42px; }
.first { border-top: 1px solid #217346; }
.sel { background: #c8c8c8; }
.fl { display: flex; justify-content: space-between; align-items: center; letter-spacing: 0; }
.c.fl { padding-left: 3px; }
.e0 { padding-left: 2px; }
.g0 { padding-left: 2px; }
.flt { width: 14px; height: 13px; flex: none; background: #f3f3f3; border: 1px solid #c3c3c3; position: relative; }
.flt::after { content: ""; position: absolute; left: 4px; top: 4.500px; border-left: 2px solid transparent; border-right: 2px solid transparent; border-top: 2.500px solid #555; }
.flt.on::before { content: ""; position: absolute; left: 5px; top: 2px; width: 6px; height: 2px; background: #444; }
.vscroll { width: 15px; margin-left: 1px; display: flex; flex-direction: column; padding-bottom: 2px; }
.sb-btn { height: 13px; border: 1px solid #c9c9c9; background: #fff; display: flex; align-items: center; justify-content: center; flex: none; }
.sb-thumb { height: 15px; border: 1px solid #b4b4b4; background: #fff; flex: none; margin-top: 0; }
.sb-track { flex: 1; background: #f0f0f0; }

/* sheet tabs */
.sheettabs { height: 23px; flex: none; display: flex; align-items: center; font-size: 11px; color: #666; }
.tabnav { width: 88px; display: flex; align-items: center; padding-left: 23px; gap: 20px; color: #217346; font-weight: 700; }
.st { height: 19px; display: flex; align-items: center; justify-content: center; flex: none; white-space: nowrap; }
.navy { background: #002060; color: #e8e8f4; }
.t1 { width: 133px; }
.active { width: 76px; margin-left: 2px; color: #217346; font-weight: 700; font-size: 11.500px; border-bottom: 2px solid #217346; height: 21px; margin-top: -2px; }
.t12 { width: 76px; border-right: 1px solid #d4d4d4; border-left: 1px solid #d4d4d4; }
.t13 { width: 77px; }
.t2 { width: 102px; margin-left: 1px; }
.t21 { width: 88px; margin-left: 1px; }
.st-more { width: 18px; text-align: center; font-weight: 700; color: #217346; margin-left: 1px; }
.st-add { margin-left: 6px; }
.st-dots { width: 16px; text-align: center; margin-left: 9px; font-size: 11px; color: #999; }
.hscroll { flex: none; width: 436px; margin: 1px 0 0 5px; height: 13px; display: flex; }
.hs-btn { width: 14px; flex: none; border: 1px solid #c0c0c0; display: flex; align-items: center; justify-content: center; background: #fff; }
.hs-thumb { width: 367px; flex: none; border: 1px solid #b4b4b4; border-left: 0; background: #fff; }
.hs-track { flex: 1; background: #ececec; }

/* status */
.status { height: 20px; flex: none; background: #217346; color: #e9f2ec; display: flex; align-items: center; font-size: 9.300px; }
.ready { margin-left: 6px; width: 42px; }
.found { width: 808px; }
.count { width: 64px; }
.view { width: 32px; height: 20px; display: flex; align-items: center; justify-content: center; flex: none; }
.view.on { background: #1a5e38; margin-right: 2px; margin-left: -1px; }
.view + .view + .view { margin-left: 3px; }
.zoom { display: flex; align-items: center; margin-left: 3px; width: 108px; }
.z-m { width: 6px; height: 2px; background: #fff; flex: none; margin-right: 3px; }
.z-track { width: 85px; height: 1px; background: #fff; position: relative; }
.z-thumb { position: absolute; left: 41px; top: -5px; width: 3px; height: 11px; background: #fff; }
.z-p { margin-left: 3px; font-size: 13px; font-weight: 700; color: #fff; }
.pct { margin-left: 5px; }

/* taskbar */
.taskbar { height: 34px; flex: none; display: flex; align-items: stretch; background: #1b2b39; color: #eee; }
.tb-start { width: 41px; flex: none; display: flex; align-items: center; justify-content: center; }
.tb-search { width: 294px; flex: none; background: #f1f1f1; display: flex; align-items: center; padding-left: 11px; position: relative; color: #333; font-size: 12px; overflow: hidden; }
.tb-search span { margin-left: 9px; }
.pueblo { margin-left: auto; }
.ti { width: 42px; flex: none; display: flex; align-items: center; justify-content: center; }
.ti-on { background: #3c4c5a; border-bottom: 2px solid #76b9ed; }
.ti-chrome { border-bottom: 2px solid #76b9ed; }
.r-circle { width: 21px; height: 21px; border-radius: 50%; background: #6c9bd2; color: #eaf2fb; display: flex; align-items: center; justify-content: center; font: 12px "Liberation Serif", serif; }
.r-big { font: 700 13px "Liberation Sans", sans-serif; fill: #2a6cc2; }
.xl { font: 700 13px "Liberation Sans", sans-serif; fill: #fff; }
.tray { flex: 1; display: flex; align-items: center; font-size: 11.500px; }
.sun { margin-left: 18px; }
.temp { margin-left: 7px; width: 25px; }
.t1x { margin-left: 21.500px; }
.t2x { margin-left: 10px; }
.t3x { margin-left: 7px; }
.t4x { margin-left: 6px; }
.t5x { margin-left: 9px; }
.t6x { margin-left: 7px; }
.t7x { margin-left: 6px; }
.clock { display: flex; flex-direction: column; align-items: center; width: 56px; margin: -3px 0 0 3.500px; font-size: 9.700px; line-height: 16px; }
.notif { position: relative; margin-left: 10px; }
.nbadge { position: absolute; left: 6px; top: 5px; width: 14px; height: 14px; border-radius: 50%; background: #4a4a4a; border: 1px solid #888; color: #fff; font: 700 9px/12px "Liberation Sans", sans-serif; text-align: center; }

/* dialog */
.dialog { position: absolute; left: 391px; top: 272px; width: 392px; height: 120px; background: #f0f0f0; border: 1px solid #9a9a9a; box-shadow: 0 2px 14px rgba(0,0,0,.4); display: flex; flex-direction: column; color: #222; }
.dlg-title { height: 21px; background: #fff; flex: none; display: flex; align-items: center; justify-content: space-between; padding: 0 6px 3px 2px; font-size: 10px; color: #333; }
.dlg-body { flex: 1; display: flex; flex-direction: column; font-size: 9.400px; line-height: 11px; }
.dlg-main { display: flex; height: 77px; }
.dlg-warn { margin: 25px 0 0 13px; }
.dlg-text { margin-left: 13px; padding-top: 12px; white-space: nowrap; }
.dlg-text p { margin: 0; }
.dlg-lead { margin-bottom: 11px !important; }
.dlg-btn { width: 56px; height: 18px; margin-left: 168px; background: #e1e1e1; border: 2px solid #0078d7; text-align: center; line-height: 14px; font-size: 9px; }

/* watermark */
.activate { position: absolute; left: 919px; top: 557px; color: rgba(120,120,120,.6); white-space: nowrap; pointer-events: none; }
.act1 { font-size: 16.300px; line-height: 20px; }
.act2 { font-size: 12.300px; line-height: 19px; }
```
